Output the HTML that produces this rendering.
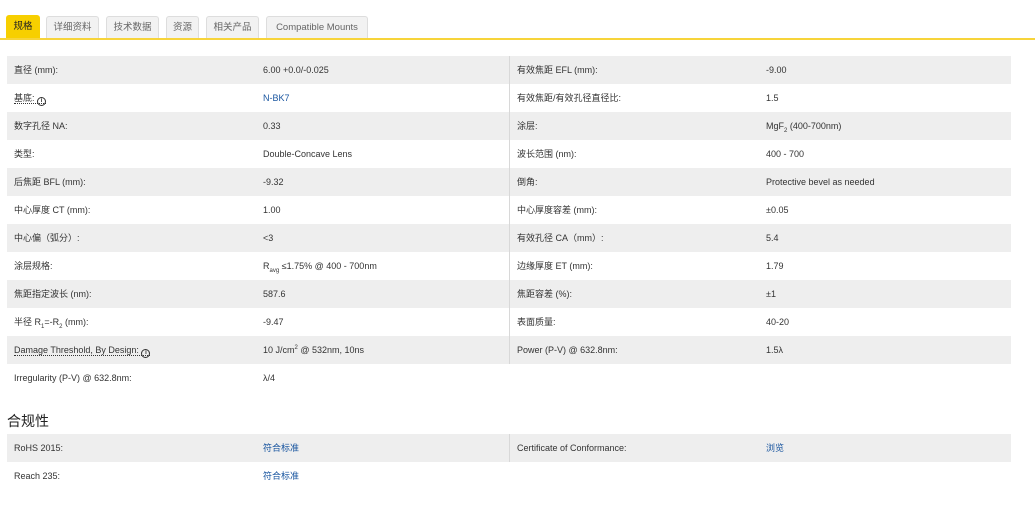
<!DOCTYPE html>
<html><head><meta charset="utf-8"><style>
*{margin:0;padding:0;box-sizing:border-box}
body{width:1035px;height:508px;background:#fff;font-family:"Liberation Sans","Noto Sans CJK SC",sans-serif;font-size:9px;color:#333;position:relative;overflow:hidden}
.tab{position:absolute;top:16px;height:22px;background:#f2f2f2;border:1px solid #ddd;border-bottom:none;border-radius:3px 3px 0 0;color:#666;font-size:9.5px;line-height:22px;text-align:center}
.tab.a{background:#f7cf00;border-color:#f7cf00;color:#222;top:15px;height:23px}
.line{position:absolute;left:0;top:38px;width:1035px;height:2px;background:#f7d43a}
.t{position:absolute;left:7px;width:1004px}
.r{height:28px;position:relative}
.r.g{background:#eeeeee}
.r > span{position:absolute;top:0;line-height:28px;white-space:nowrap}
.c1{left:7px}.c2{left:256px}.c3{left:510px}.c4{left:759px}
.div{position:absolute;left:502px;width:1px;background:#d8d8d8;z-index:2}
.lk{color:#1a56a0}
u{text-decoration:none;border-bottom:1px dotted #333}
sub,sup{font-size:6px;line-height:0}
.i{display:inline-block;width:9px;height:9px;border:1.3px solid #333;border-radius:50%;font-size:6px;line-height:6.5px;text-align:center;font-weight:bold;vertical-align:-1px;position:static}
h3{position:absolute;left:7px;top:411px;font-size:14px;font-weight:normal;color:#222}
</style></head><body>
<div class="tab a" style="left:6px;width:34px">规格</div>
<div class="tab" style="left:46px;width:53px">详细资料</div>
<div class="tab" style="left:106px;width:53px">技术数据</div>
<div class="tab" style="left:166px;width:33px">资源</div>
<div class="tab" style="left:206px;width:53px">相关产品</div>
<div class="tab" style="left:266px;width:102px">Compatible Mounts</div>
<div class="line"></div>

<div class="t" style="top:56px">
<div class="div" style="top:0;height:308px"></div>
<div class="r g"><span class="c1">直径 (mm):</span><span class="c2">6.00 +0.0/-0.025</span><span class="c3">有效焦距 EFL (mm):</span><span class="c4">-9.00</span></div>
<div class="r"><span class="c1"><u>基底: <b class="i">i</b></u></span><span class="c2 lk">N-BK7</span><span class="c3">有效焦距/有效孔径直径比:</span><span class="c4">1.5</span></div>
<div class="r g"><span class="c1">数字孔径 NA:</span><span class="c2">0.33</span><span class="c3">涂层:</span><span class="c4">MgF<sub>2</sub> (400-700nm)</span></div>
<div class="r"><span class="c1">类型:</span><span class="c2">Double-Concave Lens</span><span class="c3">波长范围 (nm):</span><span class="c4">400 - 700</span></div>
<div class="r g"><span class="c1">后焦距 BFL (mm):</span><span class="c2">-9.32</span><span class="c3">倒角:</span><span class="c4">Protective bevel as needed</span></div>
<div class="r"><span class="c1">中心厚度 CT (mm):</span><span class="c2">1.00</span><span class="c3">中心厚度容差 (mm):</span><span class="c4">±0.05</span></div>
<div class="r g"><span class="c1">中心偏（弧分）:</span><span class="c2">&lt;3</span><span class="c3">有效孔径 CA（mm）:</span><span class="c4">5.4</span></div>
<div class="r"><span class="c1">涂层规格:</span><span class="c2">R<sub>avg</sub> ≤1.75% @ 400 - 700nm</span><span class="c3">边缘厚度 ET (mm):</span><span class="c4">1.79</span></div>
<div class="r g"><span class="c1">焦距指定波长 (nm):</span><span class="c2">587.6</span><span class="c3">焦距容差 (%):</span><span class="c4">±1</span></div>
<div class="r"><span class="c1">半径 R<sub>1</sub>=-R<sub>2</sub> (mm):</span><span class="c2">-9.47</span><span class="c3">表面质量:</span><span class="c4">40-20</span></div>
<div class="r g"><span class="c1"><u>Damage Threshold, By Design: <b class="i">i</b></u></span><span class="c2">10 J/cm<sup>2</sup> @ 532nm, 10ns</span><span class="c3">Power (P-V) @ 632.8nm:</span><span class="c4">1.5λ</span></div>
<div class="r"><span class="c1">Irregularity (P-V) @ 632.8nm:</span><span class="c2">λ/4</span></div>
</div>

<h3>合规性</h3>
<div class="t" style="top:434px">
<div class="div" style="top:0;height:28px"></div>
<div class="r g"><span class="c1">RoHS 2015:</span><span class="c2 lk">符合标准</span><span class="c3">Certificate of Conformance:</span><span class="c4 lk">浏览</span></div>
<div class="r"><span class="c1">Reach 235:</span><span class="c2 lk">符合标准</span></div>
</div>
</body></html>
